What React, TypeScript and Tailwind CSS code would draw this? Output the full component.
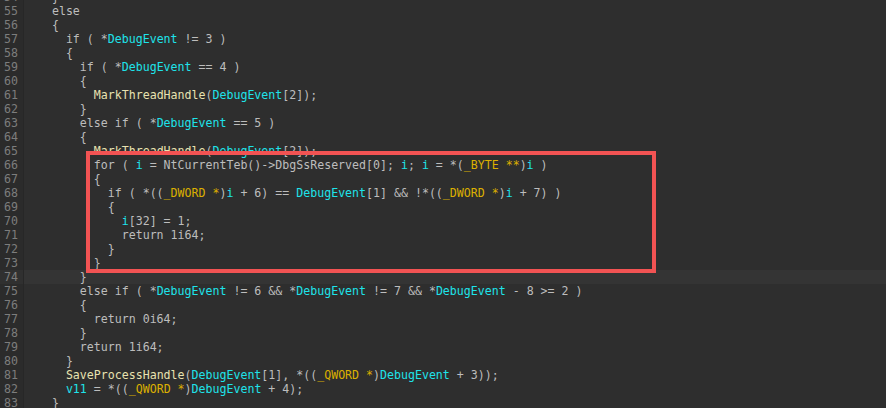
import React from "react";

const lines: [number, string][] = [
  [54, "    }"],
  [55, "    else"],
  [56, "    {"],
  [57, "      if ( *DebugEvent != 3 )"],
  [58, "      {"],
  [59, "        if ( *DebugEvent == 4 )"],
  [60, "        {"],
  [61, "          MarkThreadHandle(DebugEvent[2]);"],
  [62, "        }"],
  [63, "        else if ( *DebugEvent == 5 )"],
  [64, "        {"],
  [65, "          MarkThreadHandle(DebugEvent[2]);"],
  [66, "          for ( i = NtCurrentTeb()->DbgSsReserved[0]; i; i = *(_BYTE **)i )"],
  [67, "          {"],
  [68, "            if ( *((_DWORD *)i + 6) == DebugEvent[1] && !*((_DWORD *)i + 7) )"],
  [69, "            {"],
  [70, "              i[32] = 1;"],
  [71, "              return 1i64;"],
  [72, "            }"],
  [73, "          }"],
  [74, "        }"],
  [75, "        else if ( *DebugEvent != 6 && *DebugEvent != 7 && *DebugEvent - 8 >= 2 )"],
  [76, "        {"],
  [77, "          return 0i64;"],
  [78, "        }"],
  [79, "        return 1i64;"],
  [80, "      }"],
  [81, "      SaveProcessHandle(DebugEvent[1], *((_QWORD *)DebugEvent + 3));"],
  [82, "      v11 = *((_QWORD *)DebugEvent + 4);"],
  [83, "    }"],
  [84, "  }"],
];

function colorize(s: string) {
  const re = /(_DWORD \*|_BYTE \*\*|_QWORD \*)|\b(DebugEvent|i|v11)\b|\b(MarkThreadHandle|SaveProcessHandle)\b/g;
  const out: React.ReactNode[] = [];
  let last = 0;
  let m: RegExpExecArray | null;
  let k = 0;
  while ((m = re.exec(s))) {
    if (m.index > last) out.push(<span key={k++}>{s.slice(last, m.index)}</span>);
    let cls = "";
    if (m[1]) cls = "text-[#dcb000]";
    else if (m[2]) cls = "text-[#1ee3ea]";
    else cls = "text-[#e8e2b0]";
    out.push(
      <span key={k++} className={cls}>
        {m[0]}
      </span>
    );
    last = m.index + m[0].length;
  }
  if (last < s.length) out.push(<span key={k++}>{s.slice(last)}</span>);
  return out;
}

export default function App() {
  return (
    <div
      className="relative w-[886px] h-[408px] overflow-hidden bg-[#2e2e2e] text-[#bdbdbd]"
      style={{ fontFamily: '"DejaVu Sans Mono", "Liberation Mono", monospace' }}
    >
      <div className="-mt-[10px] flex flex-col text-[11.6px] leading-[14px]">
        {lines.map(([n, t]) => (
          <div key={n} className={`flex h-[14px] ${n === 74 ? "bg-[#343434]" : ""}`}>
            <div
              className={`w-[24px] shrink-0 pr-[5px] text-right text-[#7d7d7d] border-r border-[#272727] ${
                n === 74 ? "bg-[#303030]" : "bg-[#2b2b2b]"
              }`}
            >
              {n}
            </div>
            <div className="whitespace-pre">{colorize(t)}</div>
          </div>
        ))}
      </div>
      <div className="absolute left-[86px] top-[151px] w-[570px] h-[122px] border-[4px] border-[#f25353]" />
    </div>
  );
}
